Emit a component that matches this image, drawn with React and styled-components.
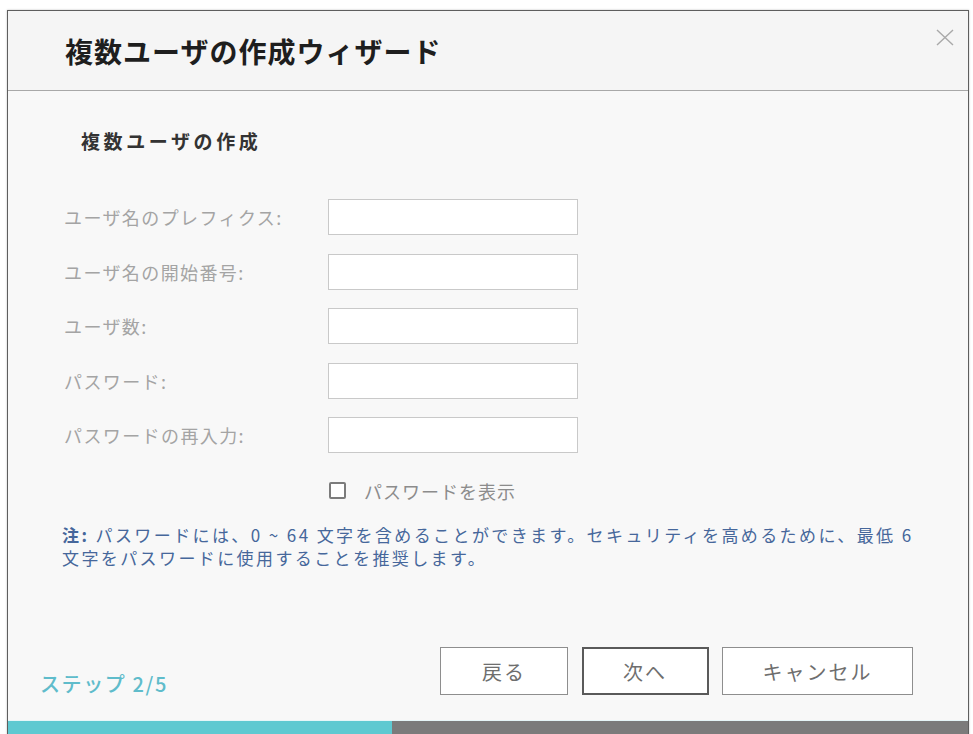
import React from "react";
import styled, { createGlobalStyle } from "styled-components";

const GlobalStyle = createGlobalStyle`
  html, body {
    margin: 0;
    padding: 0;
    background: #ffffff;
    overflow: hidden;
  }
  body {
    font-family: "Noto Sans CJK JP", "Noto Sans", sans-serif;
  }
`;

const fields = [
  "ユーザ名のプレフィクス:",
  "ユーザ名の開始番号:",
  "ユーザ数:",
  "パスワード:",
  "パスワードの再入力:",
];

const Page = styled.div`
  padding: 10px 0 0 7px;
`;

const Dialog = styled.div`
  width: 960px;
  border: 1px solid #5e5e5e;
  background: #f8f8f8;
  box-shadow: 0 0 2px rgba(0, 0, 0, 0.25);
`;

const Header = styled.div`
  position: relative;
  height: 79px;
  display: flex;
  align-items: center;
  padding-left: 57px;
  background: #f5f5f5;
  border-bottom: 1px solid #a8a8a8;
`;

const Title = styled.h1`
  margin: 0;
  font-size: 28px;
  font-weight: 700;
  letter-spacing: 1px;
  color: #1e1e1e;
  line-height: 34px;
`;

const Close = styled.button`
  position: absolute;
  top: 17px;
  right: 14px;
  width: 19px;
  height: 18px;
  padding: 0;
  border: none;
  background: transparent;
  display: flex;
  align-items: center;
  justify-content: center;
`;

const Body = styled.div`
  padding: 38px 0 0 56px;
`;

const SubTitle = styled.h2`
  margin: 0 0 46px 17px;
  font-size: 19px;
  line-height: 24px;
  font-weight: 700;
  letter-spacing: 3.6px;
  color: #333;
`;

const Form = styled.div`
  display: grid;
  grid-template-columns: 264px 250px;
  row-gap: 18.5px;
  align-items: center;
`;

const Label = styled.label`
  font-size: 18px;
  letter-spacing: 1.4px;
  color: #a4a4a4;
  line-height: 24px;
`;

const Input = styled.input`
  box-sizing: border-box;
  width: 250px;
  height: 36px;
  border: 1.5px solid #c9c9c9;
  background: #ffffff;
  outline: none;
`;

const CheckRow = styled.div`
  display: flex;
  align-items: center;
  gap: 18px;
  margin: 25.5px 0 0 265px;
  height: 24px;
`;

const Check = styled.input`
  appearance: none;
  box-sizing: border-box;
  width: 17px;
  height: 17px;
  margin: 0;
  border: 2px solid #7c7c7c;
  border-radius: 2px;
  background: #fff;
`;

const CheckLabel = styled.span`
  font-size: 18px;
  letter-spacing: 1px;
  line-height: 24px;
  color: #8c8c8c;
`;

const Note = styled.p`
  margin: 20.5px 0 0 -2px;
  font-size: 17px;
  line-height: 23px;
  letter-spacing: 2.4px;
  color: #46679b;
  b {
    font-weight: 700;
  }
`;

const Footer = styled.div`
  display: flex;
  align-items: flex-end;
  justify-content: space-between;
  margin-top: 78px;
  padding: 0 55px 0 32px;
`;

const Step = styled.span`
  font-size: 20px;
  line-height: 24px;
  font-weight: 500;
  letter-spacing: 1.6px;
  color: #5fbccb;
  margin-bottom: -1px;
`;

const Buttons = styled.div`
  display: flex;
  gap: 13.5px;
`;

const Button = styled.button`
  box-sizing: border-box;
  width: ${(p) => p.w}px;
  height: 48px;
  background: #ffffff;
  border: ${(p) => (p.active ? "2px solid #5a5a5a" : "1.5px solid #8e8e8e")};
  font-family: "Noto Sans CJK JP", sans-serif;
  font-size: 20px;
  letter-spacing: 2px;
  color: #6e6e6e;
  padding: 0;
`;

const Progress = styled.div`
  margin-top: 25px;
  height: 18px;
  background: #7b7b7b;
  border-top: 1px solid #e6f6f8;
`;

const Fill = styled.div`
  height: 100%;
  background: #5ec9d1;
`;

export default function App() {
  const step = 2;
  const total = 5;
  return (
    <>
      <GlobalStyle />
      <Page>
        <Dialog>
          <Header>
            <Title>複数ユーザの作成ウィザード</Title>
            <Close aria-label="close">
              <svg width="18" height="17" viewBox="0 0 18 17">
                <path d="M1 1 17 16M17 1 1 16" stroke="#a9a9a9" strokeWidth="1.4" fill="none" />
              </svg>
            </Close>
          </Header>
          <Body>
            <SubTitle>複数ユーザの作成</SubTitle>
            <Form>
              {fields.map((f) => (
                <React.Fragment key={f}>
                  <Label>{f}</Label>
                  <Input type={f.startsWith("パスワード") ? "password" : "text"} />
                </React.Fragment>
              ))}
            </Form>
            <CheckRow>
              <Check type="checkbox" />
              <CheckLabel>パスワードを表示</CheckLabel>
            </CheckRow>
            <Note>
              <b>注:</b> パスワードには、0 ~ 64 文字を含めることができます。セキュリティを高めるために、最低 6
              <br />
              文字をパスワードに使用することを推奨します。
            </Note>
          </Body>
          <Footer>
            <Step>
              ステップ {step}/{total}
            </Step>
            <Buttons>
              <Button w={128}>戻る</Button>
              <Button w={127} active>
                次へ
              </Button>
              <Button w={191}>キャンセル</Button>
            </Buttons>
          </Footer>
          <Progress>
            <Fill style={{ width: `${(step / total) * 100}%` }} />
          </Progress>
        </Dialog>
      </Page>
    </>
  );
}
